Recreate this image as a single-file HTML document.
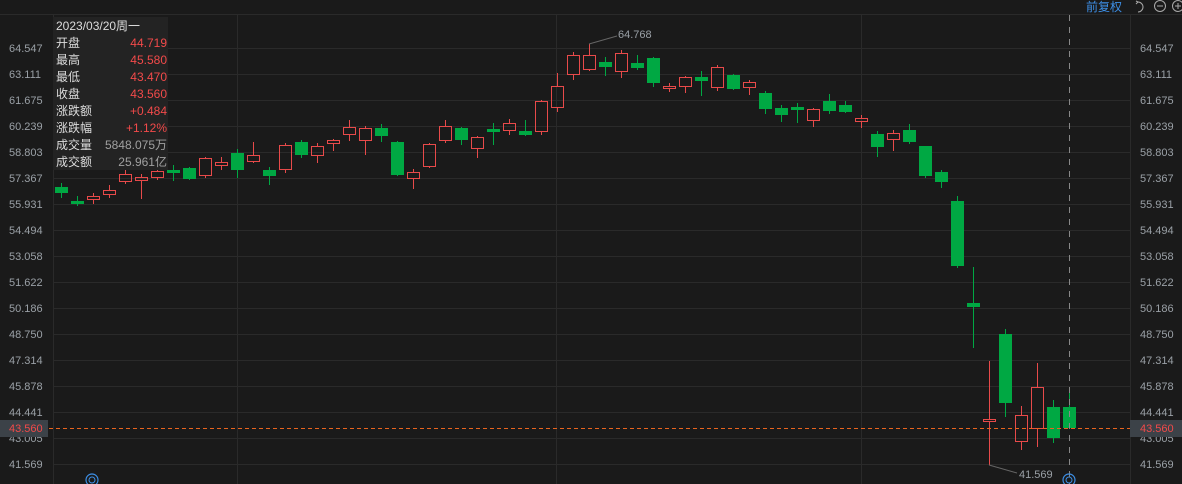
<!DOCTYPE html>
<html><head><meta charset="utf-8"><style>
html,body{margin:0;padding:0;background:#1a1a1a;width:1182px;height:484px;overflow:hidden;font-family:"Liberation Sans","Noto Sans CJK SC",sans-serif}
svg{position:absolute;left:0;top:0}
.tip{position:absolute;left:53px;top:17px;width:115px;height:153px;background:#232323;font-size:12px;color:#dcdcdc}
.tip div{height:17px;line-height:17px;padding-left:3px;position:relative}
.tip span{position:absolute;right:1px;top:0}
.r{color:#f24a4a}.g{color:#a0a0a0}
</style></head><body>
<svg id="s" width="1182" height="484" xmlns="http://www.w3.org/2000/svg"></svg>
<div class="tip">
<div style="height:18px;line-height:18px">2023/03/20周一</div>
<div>开盘<span class="r">44.719</span></div>
<div>最高<span class="r">45.580</span></div>
<div>最低<span class="r">43.470</span></div>
<div>收盘<span class="r">43.560</span></div>
<div>涨跌额<span class="r">+0.484</span></div>
<div>涨跌幅<span class="r">+1.12%</span></div>
<div>成交量<span class="g">5848.075万</span></div>
<div>成交额<span class="g">25.961亿</span></div>
</div>
<script>
var s='';
var labels=["64.547","63.111","61.675","60.239","58.803","57.367","55.931","54.494","53.058","51.622","50.186","48.750","47.314","45.878","44.441","43.005","41.569"];
for(var k=0;k<17;k++){var y=48+26*k;s+='<line x1="53" x2="1130" y1="'+(y+0.5)+'" y2="'+(y+0.5)+'" stroke="#2a2a2a"/>';}
[53,237,556,861,1130].forEach(function(x){s+='<line x1="'+(x+0.5)+'" x2="'+(x+0.5)+'" y1="14" y2="484" stroke="#2a2a2a"/>';});
s+='<line x1="0" x2="1182" y1="14.5" y2="14.5" stroke="#2a2a2a"/>';
for(var k=0;k<17;k++){var y=48+26*k+4;s+='<text x="9" y="'+y+'" fill="#9aa0a6" font-size="11">'+labels[k]+'</text><text x="1140" y="'+y+'" fill="#9aa0a6" font-size="11">'+labels[k]+'</text>';}
var c=[[187,193,183,198,'g'],[201,204,196,206,'g'],[196,200,193,204,'r'],[190,195,185,198,'r'],[174,182,170,184,'r'],[177,181,174,199,'r'],[171,178,167,180,'r'],[170,173,165,181,'g'],[168,179,167,180,'g'],[158,176,157,178,'r'],[162,166,157,170,'r'],[153,170,149,178,'g'],[155,162,142,163,'r'],[170,176,167,185,'g'],[145,170,143,173,'r'],[142,155,140,158,'g'],[146,156,143,163,'r'],[140,144,139,151,'r'],[127,135,120,141,'r'],[128,141,126,155,'r'],
[128,136,124,142,'g'],[142,175,141,176,'g'],[172,179,169,189,'r'],[144,167,143,168,'r'],[126,141,120,143,'r'],[128,140,127,145,'g'],[137,149,136,158,'r'],[129,132,123,145,'g'],[123,131,119,135,'r'],[131,135,120,136,'g'],[101,132,100,135,'r'],[86,108,73,112,'r'],
[55,75,52,80,'r'],[55,70,44,71,'r'],[62,67,57,76,'g'],[53,72,50,78,'r'],[63,68,55,70,'g'],[58,83,57,87,'g'],[86,89,83,92,'r'],[77,87,76,93,'r'],[77,81,71,96,'g'],[67,88,65,91,'r'],[75,89,74,90,'g'],[82,88,80,95,'r'],[93,109,91,114,'g'],
[108,115,105,122,'g'],[107,110,103,123,'g'],[109,121,108,127,'r'],[101,111,94,114,'g'],[105,112,101,113,'g'],[118,122,115,128,'r'],[134,147,131,157,'g'],[133,140,130,151,'r'],[130,142,124,144,'g'],[146,176,146,178,'g'],[172,182,170,188,'g'],[201,266,196,268,'g'],[303,307,267,348,'g'],[419,422,361,465,'r'],[334,403,329,417,'g'],[415,442,406,450,'r'],[387,429,363,447,'r'],[407,438,400,443,'g'],[407,428,392,428,'g']];
c.forEach(function(d,i){var x=61+16*i;var col=d[4]=='g'?'#00a843':'#e84a4a';
if(d[4]=='g'){s+='<line x1="'+(x+0.5)+'" x2="'+(x+0.5)+'" y1="'+d[2]+'" y2="'+d[3]+'" stroke="'+col+'"/>';s+='<rect x="'+(x-6)+'" y="'+d[0]+'" width="13" height="'+Math.max(2,d[1]-d[0])+'" fill="'+col+'"/>';}
else{s+='<line x1="'+(x+0.5)+'" x2="'+(x+0.5)+'" y1="'+d[2]+'" y2="'+d[0]+'" stroke="'+col+'"/><line x1="'+(x+0.5)+'" x2="'+(x+0.5)+'" y1="'+d[1]+'" y2="'+d[3]+'" stroke="'+col+'"/>';s+='<rect x="'+(x-5.5)+'" y="'+(d[0]+0.5)+'" width="12" height="'+Math.max(2,d[1]-d[0]-1)+'" fill="none" stroke="'+col+'"/>';}
});
s+='<line x1="1069.5" x2="1069.5" y1="15" y2="484" stroke="#888" stroke-dasharray="6,6"/>';
s+='<line x1="0" x2="1182" y1="428.5" y2="428.5" stroke="#e8641e" stroke-dasharray="4,3"/>';
s+='<rect x="0" y="420" width="48" height="17" fill="#3c4248"/><text x="9" y="432" fill="#f24a4a" font-size="11">43.560</text>';
s+='<rect x="1130" y="420" width="52" height="17" fill="#3c4248"/><text x="1140" y="432" fill="#f24a4a" font-size="11">43.560</text>';
s+='<line x1="589" y1="44" x2="617" y2="36" stroke="#666"/><text x="618" y="38" fill="#9aa0a6" font-size="11">64.768</text>';
s+='<line x1="989" y1="465" x2="1017" y2="473" stroke="#666"/><text x="1019" y="478" fill="#9aa0a6" font-size="11">41.569</text>';
s+='<text x="1086" y="11" fill="#3d8fe6" font-size="12">前复权</text>';
s+='<path d="M1138 2 A5 5 0 1 1 1138 12" fill="none" stroke="#aaa"/><path d="M1136 1 L1138 2 L1136 4" fill="none" stroke="#aaa"/>';
s+='<circle cx="1160" cy="6" r="5.5" fill="none" stroke="#aaa"/><line x1="1157" x2="1163" y1="6" y2="6" stroke="#aaa"/>';
s+='<circle cx="1178" cy="6" r="5.5" fill="none" stroke="#aaa"/><line x1="1175" x2="1181" y1="6" y2="6" stroke="#aaa"/><line x1="1178" x2="1178" y1="3" y2="9" stroke="#aaa"/>';
[92,1069].forEach(function(x){s+='<circle cx="'+x+'" cy="480" r="6" fill="none" stroke="#3d8fe6" stroke-width="1.2"/><circle cx="'+x+'" cy="480" r="3" fill="none" stroke="#3d8fe6"/>';});
document.getElementById('s').innerHTML=s;
</script>
</body></html>
